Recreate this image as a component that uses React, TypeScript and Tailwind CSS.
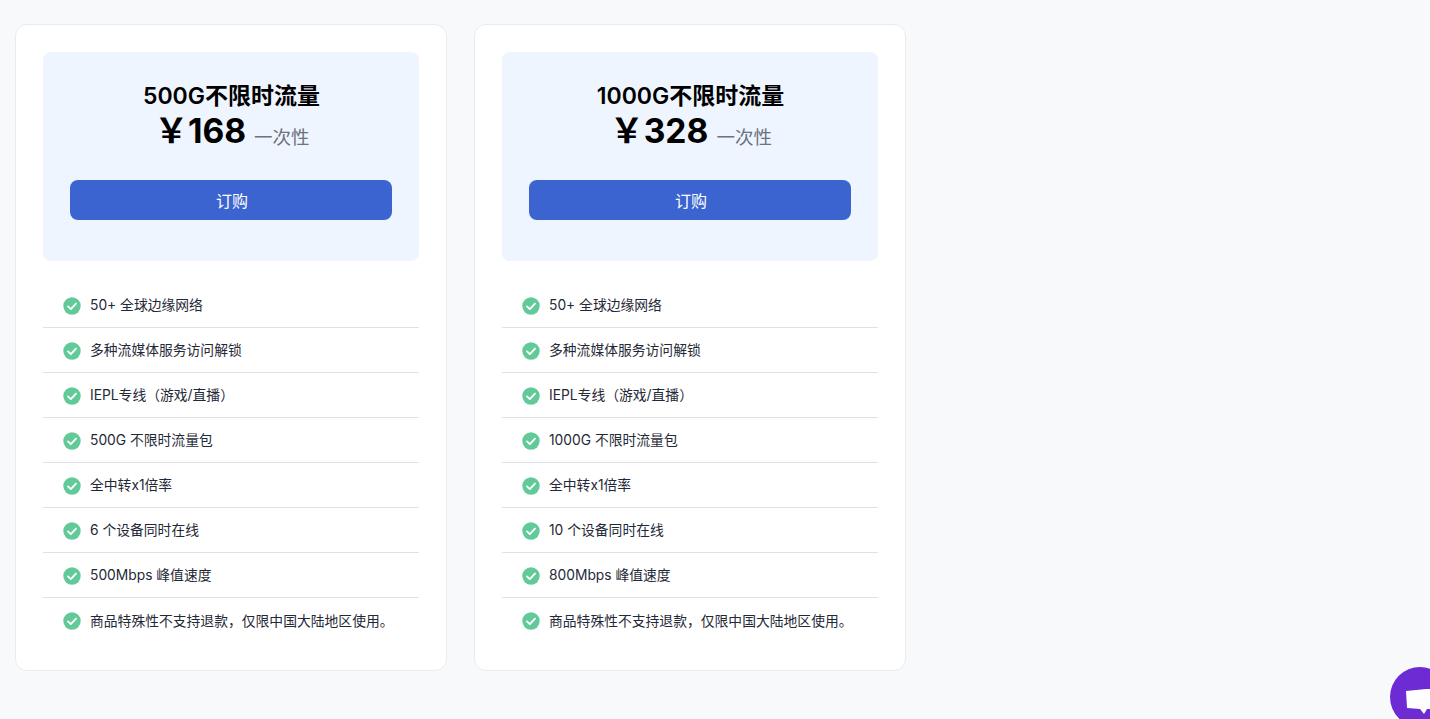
const FONT = "font-['Inter','Noto_Sans_CJK_SC',sans-serif]";

interface Plan {
  title: string;
  price: string;
  features: string[];
}

const plans: Plan[] = [
  {
    title: '500G不限时流量',
    price: '168',
    features: [
      '50+ 全球边缘网络',
      '多种流媒体服务访问解锁',
      'IEPL专线（游戏/直播）',
      '500G 不限时流量包',
      '全中转x1倍率',
      '6 个设备同时在线',
      '500Mbps 峰值速度',
      '商品特殊性不支持退款，仅限中国大陆地区使用。',
    ],
  },
  {
    title: '1000G不限时流量',
    price: '328',
    features: [
      '50+ 全球边缘网络',
      '多种流媒体服务访问解锁',
      'IEPL专线（游戏/直播）',
      '1000G 不限时流量包',
      '全中转x1倍率',
      '10 个设备同时在线',
      '800Mbps 峰值速度',
      '商品特殊性不支持退款，仅限中国大陆地区使用。',
    ],
  },
];

function CheckIcon({ last }: { last: boolean }) {
  return (
    <svg viewBox="0 0 18 18" className={`h-[18px] w-[18px] shrink-0 ${last ? 'mt-[1px]' : 'mt-[2px]'}`}>
      <circle cx="9" cy="9" r="8.7" fill="#62c998" />
      <path d="M5 9.4l2.8 2.7L13 6.6" fill="none" stroke="#fff" strokeWidth="1.9" strokeLinecap="round" strokeLinejoin="round" />
    </svg>
  );
}

function PlanCard({ plan }: { plan: Plan }) {
  return (
    <div className="w-[432px] rounded-xl border border-[#e9ecef] bg-white p-[27px]">
      <div className="h-[209px] rounded-lg bg-[#eff5ff] px-[27px] pt-[28px] text-center">
        <h3 className="pl-[1px] text-[23px] leading-[32px] font-semibold text-black">{plan.title}</h3>
        <div className="-mt-px flex h-[40px] items-center justify-center pl-[2px]">
          <span className="text-[33.6px] leading-[40px] font-bold text-black">￥{plan.price}</span>
          <span className="mt-[11px] ml-2 text-[18.5px] leading-[28px] text-[#6b7280]">一次性</span>
        </div>
        <button className="mt-[29px] h-10 w-full rounded-lg bg-[#3c64d0] pt-[2px] pl-[2px] text-base text-white">订购</button>
      </div>
      <ul className="mt-[22px]">
        {plan.features.map((f, i) => {
          const last = i === plan.features.length - 1;
          return (
            <li
              key={f}
              className={`flex h-[45px] items-center gap-[9px] pl-5 text-[13.8px] text-[#1f2937] ${last ? '' : 'border-b border-[#dee2e6]'}`}
            >
              <CheckIcon last={last} />
              <span className={last ? 'mt-[1px]' : ''}>{f}</span>
            </li>
          );
        })}
      </ul>
    </div>
  );
}

export default function App() {
  return (
    <div className={`relative h-[719px] w-[1430px] overflow-hidden bg-[#f8f9fb] ${FONT}`}>
      <div className="flex items-start gap-[27px] pt-6 pl-[15px]">
        {plans.map((p) => (
          <PlanCard key={p.title} plan={p} />
        ))}
      </div>
      {/* chat widget, cut off by the window */}
      <div className="absolute top-[667px] left-[1390px] h-[60px] w-[60px] rounded-full bg-[#6c2bd3]">
        <svg viewBox="0 0 40 30" className="absolute top-[22px] left-[16px] h-[30px] w-[40px]">
          <path d="M0 2L40 -2V20H21L18 25L14 20L1 19Z" fill="#fff" />
        </svg>
      </div>
    </div>
  );
}
